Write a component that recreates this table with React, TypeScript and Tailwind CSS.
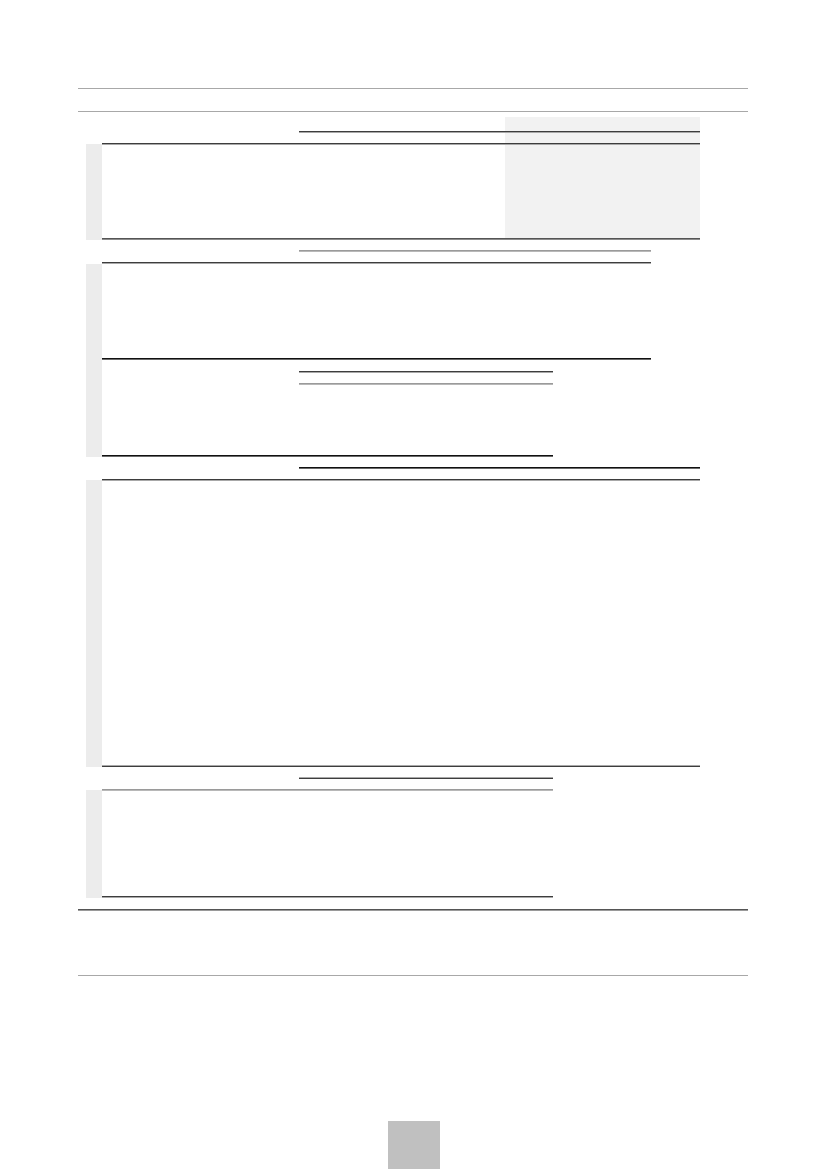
import React from 'react';
import clsx from 'clsx';

type Tone = 'a' | 'b' | 'c' | 'd' | 'g';

const toneClasses: Record<Tone, [string, string]> = {
  a: ['bg-[#3d3d3d]', 'bg-[#a8a8a8]'],
  b: ['bg-[#a8a8a8]', 'bg-[#3d3d3d]'],
  c: ['bg-[#111111]', 'bg-[#6a6a6a]'],
  d: ['bg-[#555555]', 'bg-[#8c8c8c]'],
  g: ['bg-[#9a9a9a]', 'bg-[#b8b8b8]'],
};

// two pixel table rule
const Rule2: React.FC<{ tone: Tone; className?: string }> = ({ tone, className }) => {
  const [top, bottom] = toneClasses[tone];
  return (
    <div className={className}>
      <div className={clsx('h-px', top)} />
      <div className={clsx('h-px', bottom)} />
    </div>
  );
};

interface Head {
  tone: Tone;
  short: boolean;
}

interface TableSpec {
  gap: string;
  heads: Head[];
  body: string;
  bottom: Tone;
  width: string;
  strip: string;
  shade?: boolean;
}

const tables: TableSpec[] = [
  {
    gap: 'h-[14px]',
    heads: [
      { tone: 'a', short: true },
      { tone: 'a', short: false },
    ],
    body: 'h-[93px]',
    bottom: 'd',
    width: 'w-[403px]',
    strip: 'h-[27px]',
    shade: true,
  },
  {
    gap: 'h-[10px]',
    heads: [
      { tone: 'g', short: true },
      { tone: 'a', short: false },
    ],
    body: 'h-[94px]',
    bottom: 'c',
    width: 'w-[549px]',
    strip: 'h-[24px]',
  },
  {
    gap: 'h-[11px]',
    heads: [
      { tone: 'a', short: true },
      { tone: 'g', short: true },
    ],
    body: 'h-[70px]',
    bottom: 'c',
    width: 'w-[451px]',
    strip: 'h-0',
  },
  {
    gap: 'h-[10px]',
    heads: [
      { tone: 'c', short: true },
      { tone: 'a', short: false },
    ],
    body: 'h-[284px]',
    bottom: 'b',
    width: 'w-[598px]',
    strip: 'h-[23px]',
  },
  {
    gap: 'h-[10px]',
    heads: [
      { tone: 'b', short: true },
      { tone: 'g', short: false },
    ],
    body: 'h-[105px]',
    bottom: 'a',
    width: 'w-[451px]',
    strip: 'h-[23px]',
  },
];

const Segment: React.FC<{ spec: TableSpec; inset: boolean; className?: string }> = ({ spec, inset, className }) => (
  <div className={clsx('flex flex-col', className)}>
    <div className={spec.gap} />
    {spec.heads.map((h, i) => (
      <React.Fragment key={i}>
        {i > 0 && <div className="h-[10px]" />}
        <Rule2 tone={h.tone} className={h.short && inset ? 'ml-[197px]' : undefined} />
      </React.Fragment>
    ))}
    <div className={spec.body} />
    <Rule2 tone={spec.bottom} />
  </div>
);

const Table: React.FC<{ spec: TableSpec }> = ({ spec }) => (
  <div className="flex">
    <div className="flex w-[16px] flex-col">
      <div className={spec.strip} />
      <div className="flex-1 bg-[#ececec]" />
    </div>
    <div className="flex">
      <Segment spec={spec} inset className={spec.width} />
      {spec.shade && <Segment spec={spec} inset={false} className="w-[195px] bg-[#f2f2f2]" />}
    </div>
  </div>
);

export default function App() {
  return (
    <div className="flex h-[1169px] w-[827px] flex-col overflow-hidden bg-white font-['Liberation_Sans',sans-serif]">
      <div className="ml-[78px] mr-[79px] pt-[88px]">
        <div className="h-px bg-[#a8a8a8]" />
        <div className="h-[22px]" />
        <div className="h-px bg-[#a8a8a8]" />

        <div className="mt-[5px] pl-[8px]">
          {tables.map((t, i) => (
            <Table key={i} spec={t} />
          ))}
        </div>

        <div className="mt-[11px] h-px bg-[#555555]" />
        <div className="h-px bg-[#9a9a9a]" />
        <div className="h-[64px]" />
        <div className="h-px bg-[#a8a8a8]" />
      </div>

      <div className="mt-auto flex justify-center">
        <div className="h-[48px] w-[52px] bg-[#c0c0c0]" />
      </div>
    </div>
  );
}
